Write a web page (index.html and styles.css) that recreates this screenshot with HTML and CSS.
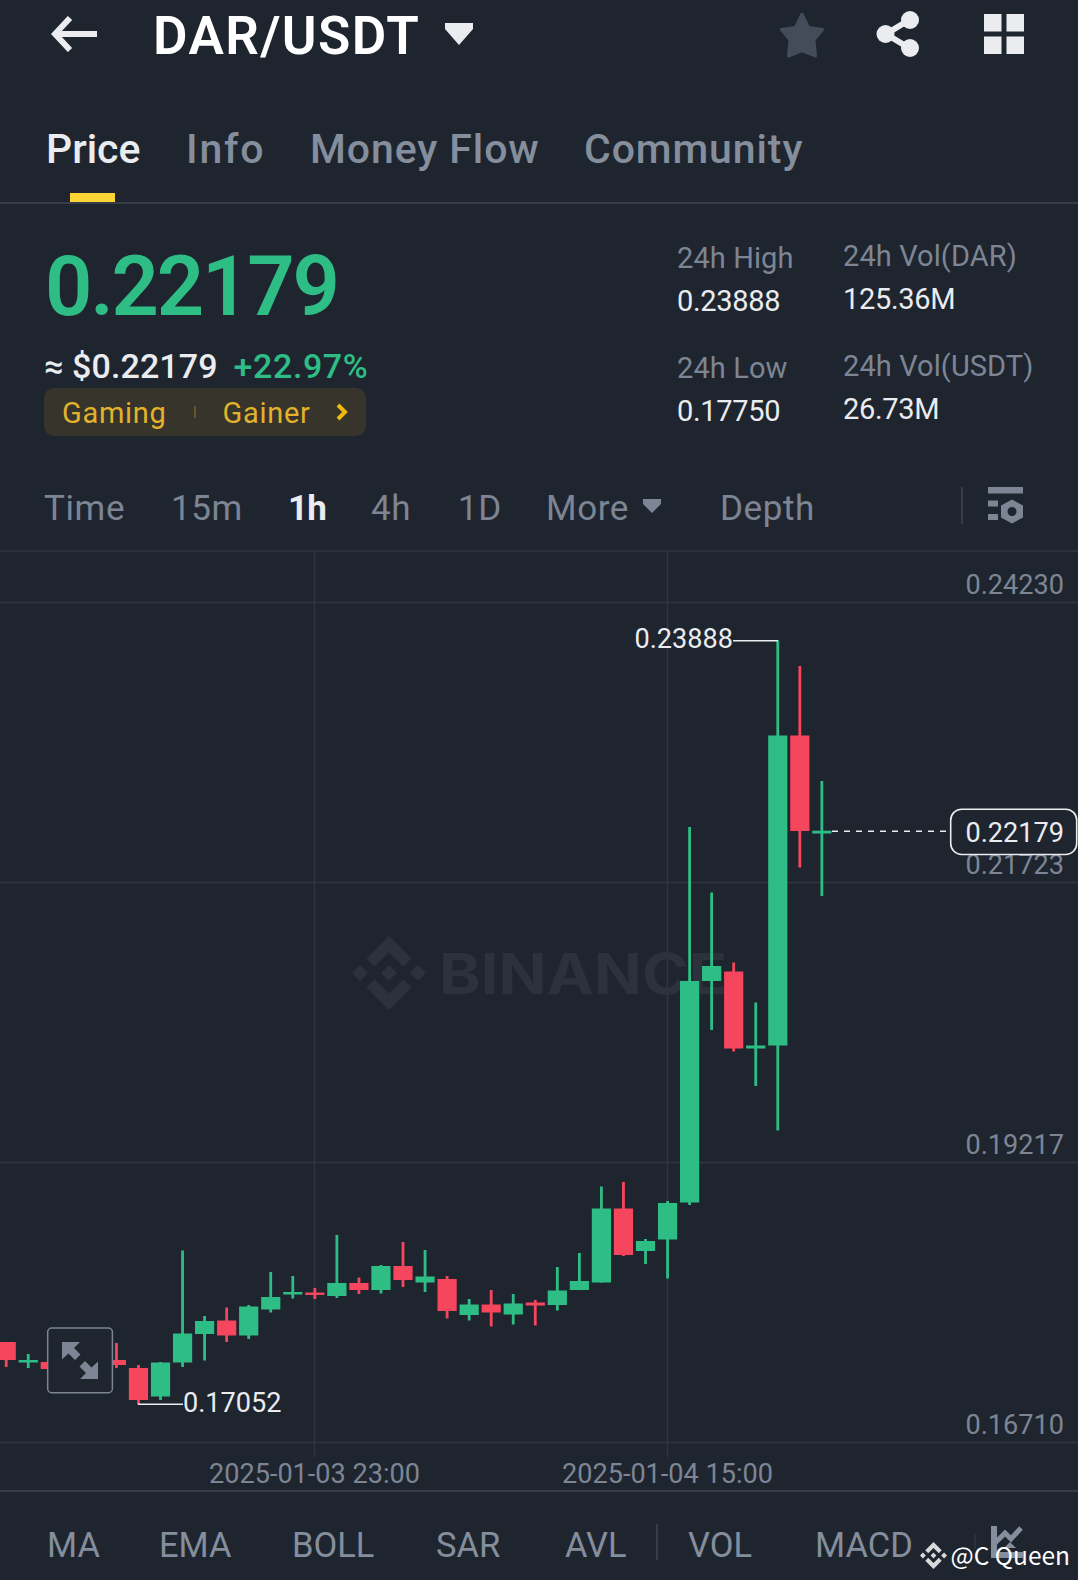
FILE: index.html
```
<!DOCTYPE html>
<html lang="en">
<head>
    <meta charset="UTF-8">
    <meta name="viewport" content="width=device-width, initial-scale=1.0">
    <title>DAR/USDT</title>
    <link rel="stylesheet" href="styles.css">
</head>
<body>
    <div id="app">

        <header class="topbar">
            <svg class="back" width="46" height="36" viewBox="0 0 46 36">
                <path d="M19 2 L4 18 L19 34 M4 18 H46" />
            </svg>
            <h1>DAR/USDT</h1>
            <svg class="caret" width="28" height="22" viewBox="0 0 28 22">
                <path d="M0 0 H28 V6 L14 22 L0 6 Z" />
            </svg>
            <svg class="star" width="44" height="46" viewBox="0 0 44 46">
                <path d="M22 2 L28.500 15.500 L42.500 17.500 L34 28 L35.500 44 L22 38.500 L8.500 44 L10 28 L1.500 17.500 L15.500 15.500 Z" />
            </svg>
            <svg class="share" width="44" height="48" viewBox="0 0 44 48">
                <path d="M34 9.500 L10 24 L34 38.500" />
                <circle cx="34" cy="10" r="9" />
                <circle cx="9.500" cy="24" r="9" />
                <circle cx="34" cy="38" r="9" />
            </svg>
            <svg class="grid-icon" width="40" height="40" viewBox="0 0 40 40">
                <path d="M0 0h17.500v17.500H0z M22.500 0H40v17.500H22.500z M0 22.500h17.500V40H0z M22.500 22.500H40V40H22.500z" />
            </svg>
        </header>

        <nav class="tabs">
            <a class="active">Price</a>
            <a class="info">Info</a>
            <a>Money Flow</a>
            <a>Community</a>
        </nav>

        <section class="summary">
            <div class="quote">
                <div class="last-price">0.22179</div>
                <div class="sub-price">≈ $0.22179<span>+22.97%</span></div>
                <div class="tags">
                    <span class="tag">Gaming</span>
                    <i></i>
                    <span class="tag">Gainer</span>
                    <svg width="12" height="18" viewBox="0 0 12 18"><path d="M2 2 L9 9 L2 16" /></svg>
                </div>
            </div>
            <dl class="stats">
                <div>
                    <dt>24h High</dt>
                    <dd>0.23888</dd>
                    <dt>24h Low</dt>
                    <dd>0.17750</dd>
                </div>
                <div class="volume">
                    <dt>24h Vol(DAR)</dt>
                    <dd>125.36M</dd>
                    <dt>24h Vol(USDT)</dt>
                    <dd>26.73M</dd>
                </div>
            </dl>
        </section>

        <div class="intervals">
            <span>Time</span>
            <span>15m</span>
            <span class="active">1h</span>
            <span>4h</span>
            <span>1D</span>
            <span>More <svg width="18" height="14" viewBox="0 0 18 14"><path d="M0 0 H18 V5 L9 14 L0 5 Z" /></svg></span>
            <span>Depth</span>
            <svg class="settings" width="35" height="37" viewBox="0 0 35 37">
                <path fill-rule="evenodd" d="M0 0h35v6.500H0z M0 13.500h10v6H0z M0 27h10v6H0z M24 12.500 L35 18.500 V30.500 L24 36.500 L13 30.500 V18.500 Z M24 20 a4.500 4.500 0 1 0 0.010 0 Z" />
            </svg>
        </div>

        <svg id="chart" width="1078" height="938" viewBox="0 552 1078 938">
            <g class="gridlines">
                <path d="M0 602.500H1078 M0 882.500H1078 M0 1162.500H1078 M0 1442.500H1078" />
                <path d="M314.500 552V1457 M667.500 552V1457" />
            </g>

            <g class="brand">
                <use href="#logo" x="352" y="936" width="74" height="74" />
                <text x="439" y="993.500" textLength="288" lengthAdjust="spacingAndGlyphs">BINANCE</text>
            </g>

            <g class="axis">
                <text x="965.500" y="594">0.24230</text>
                <text x="965.500" y="874">0.21723</text>
                <text x="965.500" y="1154">0.19217</text>
                <text x="965.500" y="1434">0.16710</text>
                <text x="209" y="1483">2025-01-03 23:00</text>
                <text x="562" y="1483">2025-01-04 15:00</text>
            </g>

            <g id="candles"></g>

            <!-- high / low markers -->
            <g class="marker">
                <text x="634.500" y="648">0.23888</text>
                <path d="M733 640.700H778" />
                <text x="183" y="1412">0.17052</text>
                <path d="M138 1404.300H183" />
            </g>

            <!-- current price -->
            <g class="marker">
                <path class="dashed" d="M832 831.300H946" />
                <rect x="950.700" y="809.200" width="126" height="45.300" rx="11" />
                <text x="965.500" y="841.700">0.22179</text>
            </g>

            <g class="expand">
                <rect x="47.700" y="1328" width="64.700" height="64.700" rx="4" />
                <path d="M62 1342h18l-6 6 6.500 6.500-5.500 5.500-6.500-6.500-6.500 6z M98 1379h-18l6-6-6.500-6.500 5.500-5.500 6.500 6.500 6.500-6z" />
            </g>
        </svg>

        <footer class="indicators">
            <span>MA</span>
            <span>EMA</span>
            <span>BOLL</span>
            <span>SAR</span>
            <span>AVL</span>
            <span class="split">VOL</span>
            <span>MACD</span>
            <svg class="draw" width="32" height="32" viewBox="0 0 32 32">
                <path d="M0 0h6v26h26v6H0z" />
                <path class="line" d="M4 17 L14 7 L20 13 L30 2" />
                <path d="M19 16l6 6H13z" />
            </svg>
            <div class="credit">
                <svg width="27" height="27"><use href="#logo" width="27" height="27" /></svg>
                <span>@C Queen</span>
            </div>
        </footer>
    </div>

    <svg class="defs" width="0" height="0">
        <symbol id="logo" viewBox="0 0 74 74">
            <path d="M37 0 L59.500 22.500 L51.500 30.500 L37 16.500 L22.500 30.500 L14.500 22.500 Z" />
            <path d="M37 74 L59.500 51.500 L51.500 43.500 L37 57.500 L22.500 43.500 L14.500 51.500 Z" />
            <path d="M37 29l8 8-8 8-8-8z M8 29l8 8-8 8-8-8z M66 29l8 8-8 8-8-8z" />
        </symbol>
    </svg>

    <script>
        // high, body top, body bottom, low, up or down
        const candles = [
            [1342, 1342, 1360, 1367, 'down'],
            [1354, 1360, 1362.5, 1368, 'up'],
            [1362, 1362, 1369, 1369, 'down'],
            [1355, 1360, 1366, 1370, 'up'],
            [1350, 1358, 1362, 1368, 'up'],
            [1343, 1360, 1365, 1368, 'down'],
            [1365, 1368, 1400, 1404.5, 'down'],
            [1362, 1362.5, 1396.5, 1400, 'up'],
            [1250.5, 1333.5, 1362.5, 1367, 'up'],
            [1316, 1321, 1334, 1360.5, 'up'],
            [1307.5, 1320.5, 1335.5, 1342, 'down'],
            [1305, 1306.5, 1335.5, 1339, 'up'],
            [1272, 1297, 1309.5, 1312.5, 'up'],
            [1276, 1292, 1294.5, 1298.5, 'up'],
            [1288, 1292.5, 1295, 1299, 'down'],
            [1235, 1283, 1296, 1298, 'up'],
            [1277.5, 1283, 1290, 1294, 'down'],
            [1265, 1266, 1290, 1293.5, 'up'],
            [1242, 1266, 1280, 1287, 'down'],
            [1250, 1276.5, 1282.5, 1292, 'up'],
            [1276, 1279, 1311, 1318.5, 'down'],
            [1299, 1304.5, 1315, 1320.5, 'up'],
            [1290, 1304.5, 1312.5, 1326.5, 'down'],
            [1294, 1303.5, 1314.5, 1324.5, 'up'],
            [1300, 1302.5, 1305.5, 1325.5, 'down'],
            [1267, 1290.5, 1305, 1310.5, 'up'],
            [1253, 1281, 1290, 1290, 'up'],
            [1186.5, 1208.5, 1282.5, 1282.5, 'up'],
            [1182, 1208.5, 1255, 1256, 'down'],
            [1239, 1241, 1251, 1264, 'up'],
            [1201, 1203, 1239.5, 1278.5, 'up'],
            [827, 981, 1202.5, 1205, 'up'],
            [892.5, 966, 981, 1030, 'up'],
            [962.5, 971.5, 1048.5, 1051.5, 'down'],
            [1002.5, 1045.5, 1048.5, 1086, 'up'],
            [640.5, 735.5, 1045.5, 1130.5, 'up'],
            [666, 735.5, 831, 867.5, 'down'],
            [781, 830.7, 833.5, 896, 'up']
        ];

        const ns = 'http://www.w3.org/2000/svg';
        const group = document.getElementById('candles');

        function addRect(x, y, width, height, type) {
            const rect = document.createElementNS(ns, 'rect');
            rect.setAttribute('x', x);
            rect.setAttribute('y', y);
            rect.setAttribute('width', width);
            rect.setAttribute('height', height);
            rect.setAttribute('class', type);
            group.appendChild(rect);
        }

        candles.forEach(function([high, top, bottom, low, type], i) {
            const center = 6.2 + i * 22.045;
            addRect(center - 1.4, high, 2.8, low - high, type);
            addRect(center - 9.6, top, 19.2, bottom - top, type);
        });
    </script>
</body>
</html>
```
FILE: styles.css
```
body {
    margin: 0;
    padding: 0;
    background-color: #1f252f;
    color: #eaecef;
    font-family: Roboto, "Liberation Sans", sans-serif;
}

#app {
    width: 1078px;
    height: 1580px;
    overflow: hidden;
}

.topbar {
    display: flex;
    align-items: center;
    height: 68px;
    padding: 0 54px 0 51px;
    box-sizing: border-box;
    fill: #eaecef;
}

.topbar h1 {
    margin: 4px 0 0 56px;
    width: 292px;
    font-size: 53px;
    font-weight: 600;
    line-height: 64px;
    letter-spacing: 1.4px;
    color: #ffffff;
}

.back {
    fill: none;
    stroke: #eaecef;
    stroke-width: 6;
}

.star {
    margin: 2px 0 0 auto;
    fill: #444c5a;
    stroke: #444c5a;
    stroke-width: 3;
    stroke-linejoin: round;
}

.share {
    margin-left: 52px;
}

.share path {
    fill: none;
    stroke: #eaecef;
    stroke-width: 6;
}

.grid-icon {
    margin-left: 64px;
}

.tabs {
    display: grid;
    grid-template-columns: 140px 124px 274px auto;
    height: 134px;
    padding-left: 46px;
    border-bottom: 2px solid #363d48;
    font-size: 41px;
    font-weight: 500;
    line-height: 162px;
    letter-spacing: 0.9px;
    color: #848e9c;
}

.tabs a {
    position: relative;
    height: 134px;
}

.tabs .info {
    letter-spacing: 1.8px;
}

.tabs .active {
    letter-spacing: 0;
    color: #eaecef;
}

.tabs .active::after {
    content: "";
    position: absolute;
    left: 24px;
    bottom: 0;
    width: 45px;
    height: 9px;
    background-color: #fcd535;
}

.summary {
    display: flex;
    height: 261px;
}

.quote {
    width: 677px;
    padding-left: 44px;
    box-sizing: border-box;
}

.last-price {
    margin-top: 38px;
    padding-left: 1px;
    font-size: 83px;
    font-weight: 600;
    line-height: 90px;
    letter-spacing: -2.2px;
    color: #2ebd85;
}

.sub-price {
    margin-top: 13px;
    height: 43px;
    font-size: 34px;
    font-weight: 500;
    line-height: 42px;
    letter-spacing: 0.1px;
}

.sub-price span {
    margin-left: 16px;
    letter-spacing: 0.6px;
    color: #2ebd85;
}

.tags {
    display: flex;
    align-items: center;
    width: 322px;
    height: 48px;
    padding: 0 18px;
    box-sizing: border-box;
    border-radius: 10px;
    background-color: #36342b;
    font-size: 29px;
    letter-spacing: 0.7px;
    color: #e3b22c;
}

.tag {
    padding-top: 1px;
}

.tags i {
    width: 2px;
    height: 12px;
    margin: 0 27px;
    background-color: #66562a;
}

.tags svg {
    margin-left: auto;
    fill: none;
    stroke: #f0b90b;
    stroke-width: 4;
}

.stats {
    display: grid;
    grid-template-columns: 166px auto;
    margin: 34px 0 0;
    font-size: 29px;
}

.volume {
    margin-top: -2px;
}

.stats dt {
    height: 42px;
    line-height: 40px;
    letter-spacing: 0.1px;
    color: #7d8594;
}

.stats dd {
    margin: 0 0 26px;
    height: 42px;
    line-height: 42px;
    letter-spacing: -0.3px;
}

.intervals {
    display: grid;
    grid-template-columns: 127px 117px 83px 87px 88px 174px 241px auto;
    height: 85px;
    padding-left: 44px;
    border-bottom: 2px solid #2b313b;
    font-size: 35px;
    line-height: 87px;
    letter-spacing: 0.6px;
    color: #7d8594;
    fill: #7d8594;
}

.intervals .active {
    font-weight: 700;
    letter-spacing: -0.8px;
    color: #eaecef;
}

.intervals span svg {
    margin-left: 5px;
    vertical-align: 7px;
}

.settings {
    align-self: start;
    margin-top: 22px;
    padding-left: 25px;
    border-left: 2px solid #363d48;
}

#chart {
    display: block;
    font-size: 27.1px;
}

.gridlines {
    fill: none;
    stroke: #303640;
    stroke-width: 1.5;
}

.brand {
    fill: #2c313c;
}

.brand text {
    font-family: Inter, sans-serif;
    font-size: 57px;
    font-weight: 700;
}

.axis {
    fill: #7d8594;
}

.up {
    fill: #2ebd85;
}

.down {
    fill: #f6465d;
}

.marker {
    fill: #eaecef;
    stroke-width: 1.6;
}

.marker path {
    stroke: #eaecef;
}

.marker rect {
    fill: #1f252f;
    stroke: #eaecef;
}

.marker .dashed {
    stroke-dasharray: 6 6;
}

.expand {
    fill: #7d8594;
}

.expand rect {
    fill: #1f252f;
    stroke: #7d8594;
    stroke-width: 1.5;
}

.indicators {
    position: relative;
    display: grid;
    grid-template-columns: 112px 133px 144px 129px 123px 127px 176px auto;
    height: 88px;
    padding-left: 47px;
    border-top: 2px solid #363d48;
    font-size: 34.5px;
    line-height: 106px;
    letter-spacing: 0;
    color: #848e9c;
    fill: #848e9c;
}

.split {
    position: relative;
}

.split::before {
    content: "";
    position: absolute;
    left: -32px;
    top: 32px;
    width: 2px;
    height: 36px;
    background-color: #363d48;
}

.draw {
    margin-top: 34px;
}

.draw .line {
    fill: none;
    stroke: #848e9c;
    stroke-width: 5;
}

/* author tag over the toolbar */
.credit {
    position: absolute;
    right: 8px;
    top: 45px;
    display: flex;
    align-items: center;
    gap: 4px;
    font-family: "Noto Sans CJK SC", sans-serif;
    font-size: 24.5px;
    line-height: 36px;
    letter-spacing: 0;
    color: #ffffff;
    fill: #d9d9d9;
}

.credit::before {
    content: "";
    position: absolute;
    left: 54px;
    top: -4px;
    width: 2px;
    height: 16px;
    background-color: #2b313b;
}

.defs {
    position: absolute;
}
```
